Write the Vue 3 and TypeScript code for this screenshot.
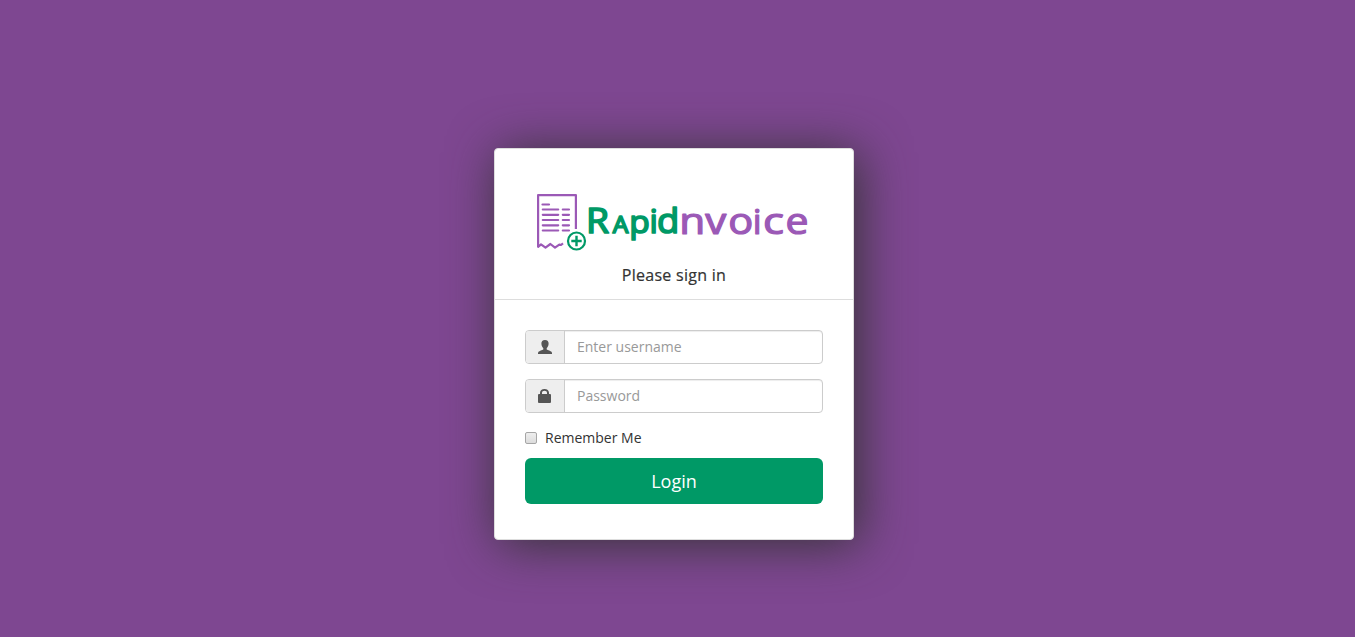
<script setup lang="ts">
import { ref } from 'vue'

const username = ref('')
const password = ref('')
const remember = ref(false)
const rows: number[] = [209.5, 214.8, 220, 225.3, 230.5]
</script>

<template>
  <main class="page">
    <section class="card">
      <header class="card-head">
        <svg class="logo" viewBox="530 190 290 64" role="img" aria-label="Rapid Invoice">
          <g fill="none" stroke="#9b59b6" stroke-width="2.2" stroke-linejoin="round">
            <path d="M575.9 229V195.1H538.1V246.8L541 244.4L545.5 247.6L550.4 244L555 247.6L559.3 244.6L561 245L563 243.4" />
            <path d="M542.5 204.5H549" stroke-linecap="round" />
            <path v-for="y in rows" :key="y" :d="`M542.8 ${y}H558.2M562.8 ${y}H569`" stroke-width="2.2" stroke-linecap="round" />
          </g>
          <g fill="none" stroke="#009966" stroke-width="2.2">
            <circle cx="576.5" cy="241" r="8.5" />
            <path d="M571.3 241H581.7M576.5 235.8V246.2" stroke-width="2.4" />
          </g>
          <g class="wordmark">
            <g class="green">
              <text x="586" y="233.2" font-size="34.5" textLength="23" lengthAdjust="spacingAndGlyphs">R</text>
              <text x="612.8" y="233.2" font-size="23" textLength="15.6" lengthAdjust="spacingAndGlyphs">A</text>
              <text x="629.3" y="233.4" font-size="31.5" textLength="20.5" lengthAdjust="spacingAndGlyphs">p</text>
              <text x="649.6" y="233.4" font-size="33">i</text>
              <text x="657" y="233.4" font-size="35" textLength="22.3" lengthAdjust="spacingAndGlyphs">d</text>
            </g>
            <g class="purple">
              <text x="679.3" y="233.9" font-size="36" textLength="26" lengthAdjust="spacingAndGlyphs">n</text>
              <text x="705.2" y="233.9" font-size="36" textLength="21" lengthAdjust="spacingAndGlyphs">v</text>
              <text x="728.2" y="233.9" font-size="36" textLength="25" lengthAdjust="spacingAndGlyphs">o</text>
              <text x="752.7" y="233.9" font-size="35">i</text>
              <text x="763" y="233.9" font-size="36" textLength="21" lengthAdjust="spacingAndGlyphs">c</text>
              <text x="785.6" y="233.9" font-size="36" textLength="23" lengthAdjust="spacingAndGlyphs">e</text>
            </g>
          </g>
        </svg>
        <h1>Please sign in</h1>
      </header>
      <form class="card-body" @submit.prevent>
        <div class="group">
          <span class="addon">
            <svg viewBox="0 0 14 14"><path d="M7 0C4.5 0 3.3 1.5 3.4 3.6C3.4 5.6 4.3 7.3 5.3 8.3V9.4C4.2 10.2 1.3 10.8.5 11.8C0 12.4 0 13.2 0 14H14C14 13.2 14 12.4 13.5 11.8C12.7 10.8 9.8 10.2 8.7 9.4V8.3C9.7 7.3 10.6 5.6 10.6 3.6C10.7 1.5 9.5 0 7 0Z" /></svg>
          </span>
          <input v-model="username" type="text" placeholder="Enter username" />
        </div>
        <div class="group">
          <span class="addon">
            <svg viewBox="0 0 14 14"><path fill-rule="evenodd" d="M2 5V3.8C2 1.4 3.8 0 6.5 0S11 1.4 11 3.8V5H12Q13 5 13 6V13Q13 14 12 14H1Q0 14 0 13V6Q0 5 1 5ZM4 5H9V3.8C9 2.5 8 1.8 6.5 1.8S4 2.5 4 3.8Z" /></svg>
          </span>
          <input v-model="password" type="password" placeholder="Password" />
        </div>
        <label class="remember"><input v-model="remember" type="checkbox" />Remember Me</label>
        <button type="submit">Login</button>
      </form>
    </section>
  </main>
</template>

<style>
body {
  margin: 0;
  background: #7e4791;
}
</style>

<style scoped>
* {
  box-sizing: border-box;
}
.page {
  height: 637px;
  padding: 148px 0 0 494px;
  overflow: hidden;
  background: #7e4791;
  color: #333;
  font: 14px/20px "Open Sans", sans-serif;
}
.card {
  width: 360px;
  height: 392px;
  border: 1px solid #ddd;
  border-radius: 4px;
  background: #fff;
  box-shadow: 5px 4px 50px #333;
}
.card-head {
  height: 151px;
  padding-top: 41px;
  border-bottom: 1px solid #ddd;
}
.logo {
  display: block;
  width: 290px;
  height: 64px;
  margin-left: 35px;
}
.wordmark {
  font-family: "Open Sans", sans-serif;
  font-weight: 400;
  stroke-linejoin: round;
}
.green {
  fill: #009966;
  stroke: #009966;
  stroke-width: 1.7px;
}
.purple {
  fill: #9b59b6;
  stroke: #9b59b6;
  stroke-width: 1.2px;
}
h1 {
  margin: 12px 0 0;
  text-align: center;
  font-size: 16px;
  font-weight: 400;
  line-height: 18px;
  letter-spacing: 0.28px;
  -webkit-text-stroke: 0.2px #333;
}
.card-body {
  padding: 30px;
}
.group {
  display: flex;
  height: 34px;
  margin-bottom: 15px;
  border: 1px solid #ccc;
  border-radius: 4px;
  overflow: hidden;
  box-shadow: inset 0 1px 1px rgba(0, 0, 0, 0.075);
}
.addon {
  display: flex;
  align-items: center;
  width: 39px;
  padding-left: 12px;
  border-right: 1px solid #ccc;
  background: #eee;
}
.addon svg {
  width: 14px;
  height: 14px;
  fill: #555;
}
.group input {
  flex: 1;
  min-width: 0;
  padding: 0 12px;
  border: 0;
  outline: 0;
  background: transparent;
  color: #555;
  font: inherit;
}
.group input::placeholder {
  color: #999;
  opacity: 1;
}
.remember {
  display: flex;
  align-items: center;
  height: 20px;
  margin-bottom: 10px;
}
.remember input {
  appearance: none;
  width: 12px;
  height: 12px;
  margin: 0 8px 0 0;
  border: 1px solid #a6a6a6;
  border-radius: 2px;
  background: linear-gradient(#eee, #dcdcdc);
}
.remember input:checked {
  background: #096;
}
button {
  display: block;
  width: 100%;
  height: 46px;
  padding: 0;
  border: 0;
  border-radius: 6px;
  background: #096;
  color: #fff;
  font: 18px/24px "Open Sans", sans-serif;
}
</style>
